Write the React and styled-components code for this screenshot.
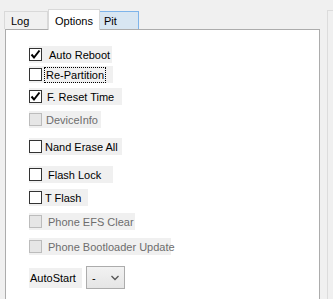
import styled, { createGlobalStyle } from 'styled-components';

const GlobalStyle = createGlobalStyle`
  html, body {
    margin: 0;
    padding: 0;
    background: #f0f0f0;
    font-family: "Liberation Sans", Arial, sans-serif;
    font-size: 11px;
    color: #000;
    overflow: hidden;
  }
`;

const Screen = styled.div`
  display: flex;
  width: 333px;
  height: 299px;
  padding: 9px 0 0 5px;
  box-sizing: border-box;
`;

const Left = styled.div`
  width: 315px;
  display: flex;
  flex-direction: column;
`;

const TabStrip = styled.div`
  display: flex;
  align-items: flex-end;
  height: 20px;
`;

const Tab = styled.div`
  box-sizing: border-box;
  height: ${(p) => (p.$active ? '21px' : '18px')};
  width: ${(p) => p.$w}px;
  padding: 1px 0 0 ${(p) => p.$pad}px;
  display: flex;
  align-items: center;
  background: ${(p) => (p.$active ? '#fff' : p.$hover ? '#d8e6f2' : '#f0f0f0')};
  border: 1px solid ${(p) => (p.$hover ? '#7eb4ea' : '#d9d9d9')};
  border-bottom: none;
  margin-bottom: ${(p) => (p.$active ? '-1px' : '0')};
  position: relative;
  z-index: ${(p) => (p.$active ? 2 : 1)};
  ${(p) => (p.$active ? '' : 'margin-left: -1px;')}
`;

const Panel = styled.div`
  flex: 1;
  background: #fff;
  border: 1px solid #acacac;
  border-bottom: none;
  padding: 16px 0 0 23px;
  display: flex;
  flex-direction: column;
  align-items: flex-start;
`;

const Row = styled.div`
  display: flex;
  align-items: center;
  height: 17px;
  width: ${(p) => p.$w}px;
  margin-top: ${(p) => p.$mt}px;
  background: #f0f0f0;
  color: ${(p) => (p.$disabled ? '#6d6d6d' : '#000')};
  white-space: nowrap;
`;

const Box = styled.span`
  box-sizing: border-box;
  flex: none;
  width: 13px;
  height: 13px;
  border: 1px solid ${(p) => (p.$disabled ? '#bcbcbc' : '#333')};
  background: ${(p) => (p.$disabled ? '#e6e6e6' : '#fff')};
  margin-right: ${(p) => p.$gap}px;
  display: flex;
  align-items: center;
  justify-content: center;
`;

const Text = styled.span`
  outline: ${(p) => (p.$focus ? '1px dotted #000' : 'none')};
  outline-offset: 0;
  padding: 0 1px;
  line-height: 14px;
`;

const SelectRow = styled.div`
  display: flex;
  align-items: center;
  margin-top: 11px;
  gap: 4px;
`;

const SelectLabel = styled.div`
  background: #f0f0f0;
  height: 20px;
  width: 53px;
  display: flex;
  align-items: center;
  padding-left: 1px;
  box-sizing: border-box;
`;

const Select = styled.div`
  box-sizing: border-box;
  width: 39px;
  height: 23px;
  border: 1px solid #acacac;
  background: linear-gradient(#f2f2f2, #e5e5e5);
  display: flex;
  align-items: center;
  justify-content: space-between;
  padding: 0 5px;
`;

const Side = styled.div`
  margin-top: 1px;
  margin-left: 7px;
  flex: 1;
  border-left: 1px solid #dcdcdc;
  border-top: 1px solid #dcdcdc;
`;

function Check() {
  return (
    <svg width="11" height="11" viewBox="0 0 11 11">
      <path d="M1.5 5.5 L4 8.5 L9.5 1.5" fill="none" stroke="#000" strokeWidth="2" />
    </svg>
  );
}

function Option({ label, checked, disabled, focus, w, mt, gap = 5 }) {
  return (
    <Row $w={w} $mt={mt} $disabled={disabled}>
      <Box $disabled={disabled} $gap={gap}>
        {checked && <Check />}
      </Box>
      <Text $focus={focus}>{label}</Text>
    </Row>
  );
}

export default function App() {
  return (
    <>
      <GlobalStyle />
      <Screen>
        <Left>
          <TabStrip>
            <Tab $w={44} $pad={6}>Log</Tab>
            <Tab $active $w={52} $pad={6}>Options</Tab>
            <Tab $hover $w={40} $pad={4}>Pit</Tab>
          </TabStrip>
          <Panel>
            <Option label="Auto Reboot" checked w={83} mt={0} gap={6} />
            <Option label="Re-Partition" focus w={84} mt={3} gap={3} />
            <Option label="F. Reset Time" checked w={93} mt={5} gap={4} />
            <Option label="DeviceInfo" disabled w={72} mt={6} gap={3} />
            <Option label="Nand Erase All" w={93} mt={10} gap={2} />
            <Option label="Flash Lock" w={84} mt={11} gap={5} />
            <Option label="T Flash" w={59} mt={6} gap={2} />
            <Option label="Phone EFS Clear" disabled w={106} mt={7} gap={5} />
            <Option label="Phone Bootloader Update" disabled w={142} mt={8} gap={5} />
            <SelectRow>
              <SelectLabel>AutoStart</SelectLabel>
              <Select>
                <span>-</span>
                <svg width="8" height="6" viewBox="0 0 8 6">
                  <path d="M0.5 1 L4 4.5 L7.5 1" fill="none" stroke="#555" strokeWidth="1.3" />
                </svg>
              </Select>
            </SelectRow>
          </Panel>
        </Left>
        <Side />
      </Screen>
    </>
  );
}
